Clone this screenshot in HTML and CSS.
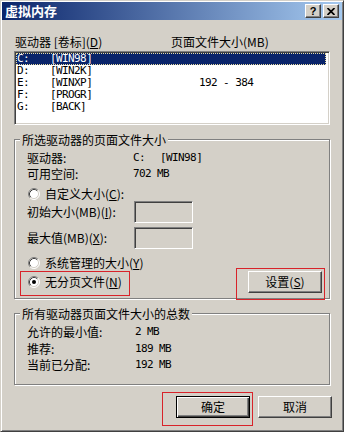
FILE: index.html
```html
<!DOCTYPE html>
<html lang="zh-CN">
<head>
<meta charset="utf-8">
<title>虚拟内存</title>
<link rel="stylesheet" href="styles.css">
</head>
<body>
<div class="window">
  <div class="titlebar">
    <span class="title">虚拟内存</span>
    <div class="caption-btns">
      <span class="cbtn help">?</span>
      <span class="cbtn close"><svg width="8" height="7" viewBox="0 0 8 7"><path d="M0.5 0 L7.5 7 M7.5 0 L0.5 7" stroke="#000" stroke-width="1.7"/></svg></span>
    </div>
  </div>
  <div class="content">
    <div class="list-head"><span>驱动器 [卷标](<u>D</u>)</span><span>页面文件大小(MB)</span></div>
    <div class="listbox mono">
      <div class="lrow sel"><span>C:</span><span>[WIN98]</span><span></span></div>
      <div class="lrow"><span>D:</span><span>[WIN2K]</span><span></span></div>
      <div class="lrow"><span>E:</span><span>[WINXP]</span><span>192 - 384</span></div>
      <div class="lrow"><span>F:</span><span>[PROGR]</span><span></span></div>
      <div class="lrow"><span>G:</span><span>[BACK]</span><span></span></div>
    </div>

    <div class="group g1">
      <span class="group-title">所选驱动器的页面文件大小</span>
      <div class="info info1">
        <span>驱动器:</span><span class="mono"><span class="drv">C:</span>[WIN98]</span>
        <span>可用空间:</span><span class="mono">702 MB</span>
      </div>
      <div class="radio-row r-custom">
        <svg class="radio" width="12" height="12" viewBox="0 0 12 12"><circle cx="6" cy="6" r="5" fill="#fff"/><path d="M2.11 9.89 A5.5 5.5 0 0 1 9.89 2.11" fill="none" stroke="#808080"/><path d="M9.89 2.11 A5.5 5.5 0 0 1 2.11 9.89" fill="none" stroke="#fff"/><path d="M2.82 9.18 A4.5 4.5 0 0 1 9.18 2.82" fill="none" stroke="#404040"/><path d="M9.18 2.82 A4.5 4.5 0 0 1 2.82 9.18" fill="none" stroke="#d4d0c8"/></svg>
        <span>自定义大小(<u>C</u>):</span>
      </div>
      <div class="field-row f-init">
        <span>初始大小(MB)(<u>I</u>):</span><span class="edit"></span>
      </div>
      <div class="field-row f-max">
        <span>最大值(MB)(<u>X</u>):</span><span class="edit"></span>
      </div>
      <div class="radio-row r-sys">
        <svg class="radio" width="12" height="12" viewBox="0 0 12 12"><circle cx="6" cy="6" r="5" fill="#fff"/><path d="M2.11 9.89 A5.5 5.5 0 0 1 9.89 2.11" fill="none" stroke="#808080"/><path d="M9.89 2.11 A5.5 5.5 0 0 1 2.11 9.89" fill="none" stroke="#fff"/><path d="M2.82 9.18 A4.5 4.5 0 0 1 9.18 2.82" fill="none" stroke="#404040"/><path d="M9.18 2.82 A4.5 4.5 0 0 1 2.82 9.18" fill="none" stroke="#d4d0c8"/></svg>
        <span>系统管理的大小(<u>Y</u>)</span>
      </div>
      <div class="last-row">
        <div class="radio-row">
          <svg class="radio" width="12" height="12" viewBox="0 0 12 12"><circle cx="6" cy="6" r="5" fill="#fff"/><path d="M2.11 9.89 A5.5 5.5 0 0 1 9.89 2.11" fill="none" stroke="#808080"/><path d="M9.89 2.11 A5.5 5.5 0 0 1 2.11 9.89" fill="none" stroke="#fff"/><path d="M2.82 9.18 A4.5 4.5 0 0 1 9.18 2.82" fill="none" stroke="#404040"/><path d="M9.18 2.82 A4.5 4.5 0 0 1 2.82 9.18" fill="none" stroke="#d4d0c8"/><circle cx="6" cy="6" r="2" fill="#000"/></svg>
          <span>无分页文件(<u>N</u>)</span>
        </div>
        <button class="btn">设置(<u>S</u>)</button>
      </div>
    </div>

    <div class="group g2">
      <span class="group-title">所有驱动器页面文件大小的总数</span>
      <div class="info info2">
        <span>允许的最小值:</span><span class="mono">2 MB</span>
        <span>推荐:</span><span class="mono">189 MB</span>
        <span>当前已分配:</span><span class="mono">192 MB</span>
      </div>
    </div>

    <div class="actions">
      <button class="btn default">确定</button>
      <button class="btn">取消</button>
    </div>
  </div>

  <div class="mark m1"></div>
  <div class="mark m2"></div>
  <div class="mark m3"></div>
</div>
</body>
</html>
```
FILE: styles.css
```css
* { box-sizing: border-box; }

body {
  margin: 0;
  font-family: "Noto Sans CJK SC", "Noto Sans", sans-serif;
  font-size: 12px;
  color: #000;
  background: #d4d0c8;
}

.mono {
  font-family: "DejaVu Sans Mono", monospace;
  font-size: 11px;
  letter-spacing: -0.6px;
}

.window {
  position: relative;
  width: 344px;
  height: 432px;
  border: 1px solid;
  border-color: #d4d0c8 #404040 #404040 #d4d0c8;
  box-shadow: inset 1px 1px #fff, inset -1px -1px #808080;
  padding: 1px;
  background: #d4d0c8;
}

/* Title bar */
.titlebar {
  height: 18px;
  display: flex;
  align-items: center;
  justify-content: space-between;
  padding: 0 3px 0 3px;
  background: linear-gradient(to right, #0a246a, #a6caf0);
}
.title {
  color: #fff;
  font-weight: bold;
  font-size: 13px;
  line-height: 18px;
}
.caption-btns {
  display: flex;
  gap: 2px;
}
.cbtn {
  width: 16px;
  height: 14px;
  display: flex;
  align-items: center;
  justify-content: center;
  background: #d4d0c8;
  border: 1px solid;
  border-color: #fff #404040 #404040 #fff;
  box-shadow: inset -1px -1px #808080;
}
.help {
  font-family: "Liberation Sans", sans-serif;
  font-weight: bold;
  font-size: 11px;
  line-height: 12px;
}

/* Content */
.content {
  padding: 0 12px;
}

.list-head {
  display: grid;
  grid-template-columns: 156px 1fr;
  margin-top: 16px;
  padding-left: 1px;
  height: 12px;
  line-height: 12px;
  white-space: nowrap;
}

.listbox {
  margin-top: 3px;
  height: 74px;
  background: #fff;
  border: 1px solid;
  border-color: #808080 #fff #fff #808080;
  box-shadow: inset 1px 1px #404040, inset -1px -1px #d4d0c8;
  padding: 1px;
}
.lrow {
  display: grid;
  grid-template-columns: 33px 149px 1fr;
  height: 12px;
  line-height: 12px;
  padding-left: 1px;
  margin-right: 2px;
  white-space: pre;
}
.lrow.sel {
  background: #0a246a;
  color: #fff;
  outline: 1px dotted #e8dca0;
  outline-offset: -1px;
}

/* Group boxes */
.group {
  border: 1px solid #808080;
  box-shadow: inset 1px 1px #fff, 1px 1px #fff;
  padding: 0 7px 0 12px;
}
.group-title {
  display: block;
  width: max-content;
  margin: -6px 0 0 -7px;
  padding: 0 2px;
  height: 12px;
  line-height: 12px;
  background: #d4d0c8;
}
.g1 {
  margin-top: 14px;
  padding-bottom: 5px;
}
.g2 {
  margin-top: 14px;
  padding-bottom: 13px;
}

.info {
  display: grid;
  line-height: 12px;
  white-space: pre;
}
.info1 {
  grid-template-columns: 106px 1fr;
  row-gap: 4px;
  margin-top: 6px;
}
.info2 {
  grid-template-columns: 108px 1fr;
  row-gap: 4.5px;
  margin-top: 6px;
}
.drv {
  display: inline-block;
  width: 27px;
}

.radio-row {
  display: flex;
  align-items: center;
  height: 12px;
  line-height: 12px;
  gap: 5px;
}
.radio {
  margin-left: 1px;
  flex: none;
}
.r-custom { margin-top: 8px; }
.r-sys { margin-top: 8px; }

.field-row {
  display: grid;
  grid-template-columns: 106px 1fr;
  align-items: center;
  height: 22px;
  line-height: 12px;
}
.f-init { margin-top: 1px; }
.f-max { margin-top: 4px; }

.edit {
  display: block;
  margin-left: 1px;
  width: 59px;
  height: 22px;
  background: #d4d0c8;
  border: 1px solid;
  border-color: #808080 #fff #fff #808080;
  box-shadow: inset 1px 1px #404040, inset -1px -1px #d4d0c8;
}

.last-row {
  display: flex;
  align-items: center;
  justify-content: space-between;
  height: 22px;
  margin-top: 2px;
}

/* Buttons */
.btn {
  width: 74px;
  height: 22px;
  padding: 0;
  font: inherit;
  font-size: 12px;
  line-height: 18px;
  color: #000;
  background: #d4d0c8;
  border: 1px solid;
  border-color: #fff #404040 #404040 #fff;
  box-shadow: inset -1px -1px #808080;
}
.btn.default {
  border-color: #000;
  box-shadow: inset 1px 1px #fff, inset -1px -1px #404040, inset -2px -2px #808080;
}

.actions {
  display: flex;
  justify-content: flex-end;
  gap: 8px;
  margin-top: 11px;
  margin-right: -2px;
}

/* Red annotation boxes */
.mark {
  position: absolute;
  border: 1px solid #d8232a;
}
.m1 { left: 19px; top: 270px; width: 110px; height: 25px; }
.m2 { left: 235px; top: 267px; width: 89px; height: 32px; }
.m3 { left: 161px; top: 391px; width: 91px; height: 34px; }
```
